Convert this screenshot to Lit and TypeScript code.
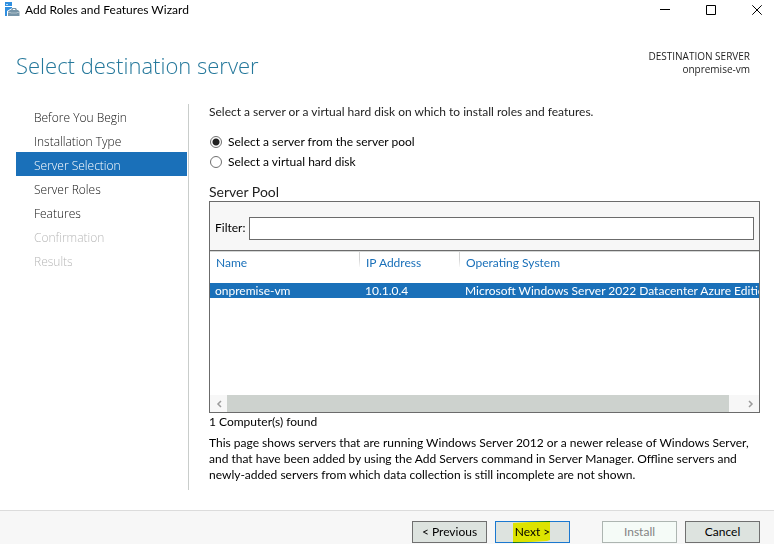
import { LitElement, html, css, svg } from "lit";
import { customElement, state } from "lit/decorators.js";
import { classMap } from "lit/directives/class-map.js";

type Step = { label: string; disabled?: boolean };

const STEPS: Step[] = [
  { label: "Before You Begin" },
  { label: "Installation Type" },
  { label: "Server Selection" },
  { label: "Server Roles" },
  { label: "Features" },
  { label: "Confirmation", disabled: true },
  { label: "Results", disabled: true },
];

const SERVERS = [
  {
    name: "onpremise-vm",
    ip: "10.1.0.4",
    os: "Microsoft Windows Server 2022 Datacenter Azure Edition",
  },
];

const wizardIcon = html`<svg class="app-icon" width="16" height="16" viewBox="0 0 16 16" aria-hidden="true">
  <path d="M0 0h7v4H0z M0 5h7v1L2 9v5H0z" fill="#2f8fe0" />
  <path d="M1 2h2v1H1z" fill="#b9dcf8" />
  <path d="M3 9.500 5 8h1l1-2h4l1 2h1l1.500 1.500V14H3z" fill="#7795a8" />
  <path d="M7.500 8 8.200 7h1.800L10.500 8z" fill="#fff" />
  <path d="M3 10.500h2.500v.5h6.500v-.5h2.500" fill="none" stroke="#c3d1d9" stroke-width="0.700" />
</svg>`;

const glyphs = {
  min: svg`<path d="M0 4.500h10" />`,
  max: svg`<path d="M.5.5h9v9h-9z" />`,
  close: svg`<path d="M.3.3l9.400 9.400M9.700.3.3 9.700" />`,
};

@customElement("app-root")
export class AppRoot extends LitElement {
  @state() private source = "pool";
  @state() private current = 2;

  static styles = css`
    :host {
      display: flex;
      flex-direction: column;
      min-height: 100vh;
      box-sizing: border-box;
      background: #fff;
      color: #1e1e1e;
      font: 12px/16px Lato, "Open Sans", sans-serif;
    }
    * { box-sizing: border-box; }
    button, input { font: inherit; color: inherit; margin: 0; }
    .titlebar {
      display: flex;
      align-items: center;
      height: 20px;
      padding-left: 5px;
      color: #000;
    }
    .title { flex: 1; padding-left: 4px; }
    .app-icon { display: block; }
    .window-controls { display: flex; gap: 12px; }
    .window-controls button {
      width: 34px;
      height: 18px;
      padding: 0;
      border: 0;
      background: none;
      display: grid;
      place-items: center;
    }
    .window-controls svg { fill: none; stroke: #000; display: block; }
    header {
      display: flex;
      justify-content: space-between;
      padding: 29px 24px 0 16px;
      height: 84px;
    }
    h1 {
      margin: 0;
      font-family: "Open Sans", "Noto Sans", sans-serif;
      font-size: 22px;
      line-height: 32px;
      font-weight: 300;
      color: #25789b;
    }
    .destination {
      text-align: right;
      font-family: "Open Sans", "Noto Sans", sans-serif;
      font-size: 10px;
      line-height: 13px;
      padding-top: 1px;
    }
    .body { flex: 1; display: flex; padding: 0 14px 20px 16px; }
    nav {
      width: 173px;
      flex: none;
      border-right: 1px solid #c9cdcb;
      padding-right: 1px;
    }
    nav ul { list-style: none; margin: 0; padding: 0; }
    nav a {
      display: block;
      height: 24px;
      line-height: 28px;
      padding-left: 18px;
      color: #111;
      font-family: "Open Sans", "Noto Sans", sans-serif;
      font-weight: 300;
      text-decoration: none;
    }
    nav a.current { background: #1a70b9; color: #fff; }
    nav a.disabled { color: #b8b8b8; }
    main { flex: 1; min-width: 0; padding-left: 20px; }
    p { margin: 0; }
    fieldset { border: 0; margin: 12px 0 0; padding: 0; }
    .radio { display: flex; align-items: center; height: 20px; color: #000; }
    .radio input {
      appearance: none;
      width: 12px;
      height: 12px;
      margin: 0 6px 0 1px;
      border: 1px solid #707070;
      border-radius: 50%;
      background: #fff;
    }
    .radio input:checked {
      background: radial-gradient(circle, #212121 3px, #fff 4px);
    }
    h2 { margin: 12px 0 0; font-size: 14px; line-height: 16px; padding-bottom: 1px; font-weight: 400; }
    .pool { border: 1px solid #6b6b6b; }
    .filter {
      display: flex;
      align-items: center;
      gap: 4px;
      height: 49px;
      padding: 4px 5px 0;
      background: #f7f7f7;
      border-bottom: 1px solid #6b6b6b;
      color: #000;
    }
    .filter input {
      flex: 1;
      min-width: 0;
      height: 23px;
      border: 1px solid #6b6b6b;
      background: #fff;
      padding: 0 4px;
    }
    .list { height: 144px; overflow: hidden; border-top: 1px solid #d4d6d5; }
    table { width: 100%; table-layout: fixed; border-collapse: collapse; }
    .col-name { width: 150px; }
    .col-ip { width: 100px; }
    th, td { padding: 0; text-align: left; font-weight: 400; white-space: nowrap; }
    th { height: 31px; vertical-align: top; color: #1a70b9; }
    th span {
      display: block;
      height: 15px;
      line-height: 22px;
      padding-left: 6px;
    }
    th:not(:last-child) span {
      border-right: 1px solid;
      border-image: linear-gradient(#d4d4d4 50%, #fff) 1;
    }
    td {
      height: 15px;
      line-height: 15px;
      padding-left: 5px;
      overflow: hidden;
      background: #1a70b9;
      color: #fff;
    }
    .scrollbar { display: flex; height: 17px; background: #f7f7f7; }
    .scrollbar button {
      width: 17px;
      padding: 0;
      border: 0;
      background: none;
      display: grid;
      place-items: center;
    }
    .scrollbar svg { fill: none; stroke: #9b9b9b; stroke-width: 1.500; }
    .thumb { flex: 1; background: #cdd2ce; margin-right: 13px; }
    .count { padding-top: 1px; color: #000; }
    .note { padding-top: 5px; color: #000; }
    footer {
      display: flex;
      justify-content: flex-end;
      gap: 8px;
      height: 34px;
      padding: 10px 14px 0 16px;
      background: #f7f7f7;
      border-top: 1px solid #dcdcdc;
    }
    footer button {
      position: relative;
      width: 75px;
      height: 22px;
      padding: 0;
      border: 1px solid #707070;
      background: #dde3df;
      color: #000;
    }
    footer .next { border-color: #1a78d0; margin-right: 24px; }
    footer button:disabled { background: #f5fbf7; border-color: #adb5b1; color: #838383; }
    .marker {
      position: absolute;
      left: 16px;
      top: -1px;
      mix-blend-mode: multiply;
    }
  `;

  private pickStep(e: Event, i: number) {
    e.preventDefault();
    if (!STEPS[i].disabled) this.current = i;
  }

  private radio(value: string, label: string) {
    return html`<label class="radio">
      <input type="radio" name="source" .checked=${this.source === value}
        @change=${() => (this.source = value)} />${label}
    </label>`;
  }

  private control(label: string, glyph: unknown) {
    return html`<button aria-label=${label}>
      <svg width="10" height="10" viewBox="0 0 10 10">${glyph}</svg>
    </button>`;
  }

  render() {
    return html`
      <div class="titlebar">
        ${wizardIcon}
        <span class="title">Add Roles and Features Wizard</span>
        <div class="window-controls">
          ${this.control("Minimize", glyphs.min)}
          ${this.control("Maximize", glyphs.max)}
          ${this.control("Close", glyphs.close)}
        </div>
      </div>
      <header>
        <h1>Select destination server</h1>
        <div class="destination">
          <div>DESTINATION SERVER</div>
          <div>onpremise-vm</div>
        </div>
      </header>
      <div class="body">
        <nav>
          <ul>
            ${STEPS.map((s, i) => html`<li>
              <a href="#" class=${classMap({ current: i === this.current, disabled: !!s.disabled })}
                aria-disabled=${s.disabled ? "true" : "false"}
                @click=${(e: Event) => this.pickStep(e, i)}>${s.label}</a>
            </li>`)}
          </ul>
        </nav>
        <main>
          <p>Select a server or a virtual hard disk on which to install roles and features.</p>
          <fieldset aria-label="Server source">
            ${this.radio("pool", "Select a server from the server pool")}
            ${this.radio("vhd", "Select a virtual hard disk")}
          </fieldset>
          <h2>Server Pool</h2>
          <section class="pool">
            <div class="filter">
              <label for="filter">Filter:</label>
              <input id="filter" type="text" />
            </div>
            <div class="list">
              <table>
                <colgroup><col class="col-name" /><col class="col-ip" /><col /></colgroup>
                <thead>
                  <tr>
                    <th><span>Name</span></th>
                    <th><span>IP Address</span></th>
                    <th><span>Operating System</span></th>
                  </tr>
                </thead>
                <tbody>
                  ${SERVERS.map((s) => html`<tr><td>${s.name}</td><td>${s.ip}</td><td>${s.os}</td></tr>`)}
                </tbody>
              </table>
            </div>
            <div class="scrollbar">
              <button aria-label="Scroll left">
                <svg width="6" height="8" viewBox="0 0 6 8"><path d="M5 1 2 4l3 3" /></svg>
              </button>
              <div class="thumb"></div>
              <button aria-label="Scroll right">
                <svg width="6" height="8" viewBox="0 0 6 8"><path d="M1 1l3 3-3 3" /></svg>
              </button>
            </div>
          </section>
          <p class="count">1 Computer(s) found</p>
          <p class="note">
            This page shows servers that are running Windows Server 2012 or a newer release of Windows Server,
            and that have been added by using the Add Servers command in Server Manager. Offline servers and
            newly-added servers from which data collection is still incomplete are not shown.
          </p>
        </main>
      </div>
      <footer>
        <button>&lt; Previous</button>
        <button class="next">
          Next &gt;
          <svg class="marker" width="40" height="22" viewBox="0 0 40 22" aria-hidden="true">
            <path d="M1 2 18 1 38 0v19l-3 1-16 1-18 1z" fill="#ffff00" />
          </svg>
        </button>
        <button disabled>Install</button>
        <button>Cancel</button>
      </footer>
    `;
  }
}
